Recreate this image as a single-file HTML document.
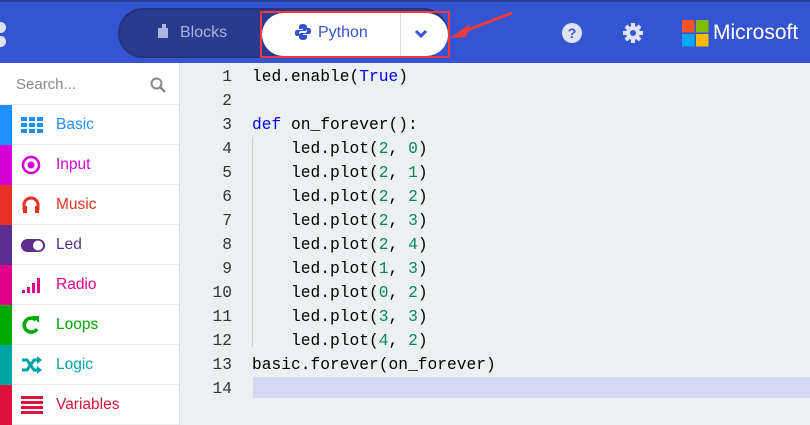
<!DOCTYPE html>
<html><head><meta charset="utf-8"><style>
*{margin:0;padding:0;box-sizing:border-box}
body{width:810px;height:425px;overflow:hidden;background:#ecf0f1;font-family:"Liberation Sans",sans-serif;position:relative}
#hdr{position:absolute;left:0;top:0;width:810px;height:63px;background:#3454d1;border-top:2px solid #2a3f9e}
.pill{position:absolute;left:118px;top:6px;width:330px;height:50px;border-radius:25px;background:#2a3b8f;border:2px solid #24337a}
.blk{position:absolute;left:157px;top:22px;color:#a9b4e0;font-size:16px}
.py{position:absolute;left:262px;top:11px;width:186px;height:43px;background:#fff;border-radius:22px 22px 22px 22px}
.py span{position:absolute;left:56px;top:11px;color:#3454d1;font-size:16px}
.sep{position:absolute;left:138px;top:0;width:1px;height:43px;background:#ddd}
.red{position:absolute;left:260px;top:9px;width:190px;height:47px;border:2px solid #f03a3a}
#side{position:absolute;left:0;top:63px;width:180px;height:362px;background:#fff;border-right:1px solid #ddd}
.srch{height:42px;padding:13px 16px;color:#888;font-size:15px;position:relative;border-bottom:1px solid #eee}
.it{height:40px;position:relative;border-bottom:1px solid #eee;font-size:15.5px}
.it .c{position:absolute;left:0;top:0;width:12px;height:40px}
.it .t{position:absolute;left:56px;top:11px}
.it svg{position:absolute;left:21px;top:10px}
#code{position:absolute;left:180px;top:67px;font-family:"Liberation Mono",monospace;font-size:16.25px;color:#000}
.ln{position:absolute;left:0;width:52px;text-align:right;color:#333}
.cd{position:absolute;left:72px;white-space:pre}
.k{color:#00f}.n{color:#098658}
</style></head><body>
<div id="hdr">
<div style="position:absolute;left:-6px;top:20px;width:12px;height:11px;border-radius:6px;background:#dfe3f5"></div>
<div style="position:absolute;left:-6px;top:34px;width:12px;height:11px;border-radius:6px;background:#dfe3f5"></div>
<div class="pill"></div>
<svg style="position:absolute;left:158px;top:22px" width="14" height="14"><path d="M0 4h4V0h4v4h2v10H0z" fill="#a9b4e0"/></svg>
<div class="blk" style="left:180px">Blocks</div>
<div class="py"><svg style="position:absolute;left:33px;top:11px" width="16" height="16" viewBox="0 0 16 16"><path d="M8 0C4 0 4 2 4 3v2h4v1H2C0 6 0 8 0 9s0 3 2 3h2V9c0-1 1-2 2-2h4c1 0 2-1 2-2V3c0-2-2-3-4-3z" fill="#3454d1"/><path d="M8 16c4 0 4-2 4-3v-2H8v-1h6c2 0 2-2 2-3s0-3-2-3h-2v3c0 1-1 2-2 2H6c-1 0-2 1-2 2v2c0 2 2 3 4 3z" fill="#3454d1"/></svg><span>Python</span><div class="sep"></div>
<svg style="position:absolute;left:152px;top:16px" width="14" height="10"><path d="M2 2l5 5 5-5" stroke="#3454d1" stroke-width="3" fill="none"/></svg></div>
<div class="red"></div>
<svg style="position:absolute;left:448px;top:8px" width="66" height="30"><path d="M64 3L14 22" stroke="#f03a3a" stroke-width="3"/><path d="M2 28L22 14L18 27z" fill="#f03a3a"/></svg>
<svg style="position:absolute;left:561px;top:20px" width="22" height="22"><circle cx="11" cy="11" r="10" fill="#dfe3f5"/><text x="11" y="16" text-anchor="middle" font-size="14" font-weight="bold" fill="#3454d1" font-family="Liberation Sans">?</text></svg>
<svg style="position:absolute;left:622px;top:20px" width="22" height="22" viewBox="0 0 22 22"><g fill="#dfe3f5"><circle cx="11" cy="11" r="7"/><rect x="9" y="1" width="4" height="20"/><rect x="1" y="9" width="20" height="4"/><rect x="9" y="1" width="4" height="20" transform="rotate(45 11 11)"/><rect x="9" y="1" width="4" height="20" transform="rotate(-45 11 11)"/></g><circle cx="11" cy="11" r="3" fill="#3454d1"/></svg>
<svg style="position:absolute;left:682px;top:18px" width="27" height="27"><rect width="12.5" height="12.5" fill="#f35325"/><rect x="14" width="12.5" height="12.5" fill="#81bc06"/><rect y="14" width="12.5" height="12.5" fill="#05a6f0"/><rect x="14" y="14" width="12.5" height="12.5" fill="#ffba08"/></svg>
<div style="position:absolute;left:713px;top:19px;color:#fff;font-size:21px">Microsoft</div>
</div>
<div id="side">
<div class="srch">Search...<svg style="position:absolute;left:150px;top:14px" width="16" height="16"><circle cx="6.5" cy="6.5" r="5" stroke="#888" stroke-width="2" fill="none"/><path d="M10 10l5 5" stroke="#888" stroke-width="2.5"/></svg></div>
<div class="it"><div class="c" style="background:#1e90ff"></div><svg width="22" height="20"><g fill="#1e90ff"><rect x="0" y="2" width="6" height="4"/><rect x="8" y="2" width="6" height="4"/><rect x="16" y="2" width="6" height="4"/><rect x="0" y="8" width="6" height="4"/><rect x="8" y="8" width="6" height="4"/><rect x="16" y="8" width="6" height="4"/><rect x="0" y="14" width="6" height="4"/><rect x="8" y="14" width="6" height="4"/><rect x="16" y="14" width="6" height="4"/></g></svg><div class="t" style="color:#1e90ff">Basic</div></div>
<div class="it"><div class="c" style="background:#d400d4"></div><svg width="22" height="20"><circle cx="10" cy="10" r="8" stroke="#d400d4" stroke-width="2.5" fill="none"/><circle cx="10" cy="10" r="3.5" fill="#d400d4"/></svg><div class="t" style="color:#d400d4">Input</div></div>
<div class="it"><div class="c" style="background:#e63022"></div><svg width="22" height="20"><path d="M3 15V10a7 7 0 0 1 14 0v5" stroke="#e63022" stroke-width="3" fill="none"/><rect x="2" y="11" width="4" height="7" fill="#e63022"/><rect x="14" y="11" width="4" height="7" fill="#e63022"/></svg><div class="t" style="color:#e63022">Music</div></div>
<div class="it"><div class="c" style="background:#5c2d91"></div><svg width="24" height="20"><rect x="0" y="4" width="24" height="13" rx="6.5" fill="#5c2d91"/><circle cx="17" cy="10.5" r="5" fill="#fff"/></svg><div class="t" style="color:#5c2d91">Led</div></div>
<div class="it"><div class="c" style="background:#e3008c"></div><svg width="22" height="20"><g fill="#e3008c"><rect x="1" y="15" width="3" height="3"/><rect x="6" y="12" width="3" height="6"/><rect x="11" y="8" width="3" height="10"/><rect x="16" y="3" width="3" height="15"/></g></svg><div class="t" style="color:#e3008c">Radio</div></div>
<div class="it"><div class="c" style="background:#00aa00"></div><svg width="22" height="20"><path d="M15 5A7 7 0 1 0 16 14" stroke="#00aa00" stroke-width="3.5" fill="none"/><path d="M11 1h7v7z" fill="#00aa00"/></svg><div class="t" style="color:#00aa00">Loops</div></div>
<div class="it"><div class="c" style="background:#00a4a6"></div><svg width="22" height="20"><path d="M1 5h5l7 10h4M1 15h5l7-10h4" stroke="#00a4a6" stroke-width="3" fill="none"/><path d="M16 1l5 4-5 4zM16 11l5 4-5 4z" fill="#00a4a6"/></svg><div class="t" style="color:#00a4a6">Logic</div></div>
<div class="it"><div class="c" style="background:#dc143c"></div><svg width="22" height="20"><g fill="#dc143c"><rect y="1" width="22" height="3"/><rect y="6" width="22" height="3"/><rect y="11" width="22" height="3"/><rect y="16" width="22" height="3"/></g></svg><div class="t" style="color:#dc143c">Variables</div></div>
</div>
<div style="position:absolute;left:252px;top:137px;width:1px;height:210px;background:#ccc"></div>
<div style="position:absolute;left:253px;top:377px;width:557px;height:21px;background:#d5d8f2"></div>
<div id="code">
<div class="ln" style="top:0">1</div><div class="cd" style="top:0">led.enable(<span class="k">True</span>)</div>
<div class="ln" style="top:24px">2</div>
<div class="ln" style="top:48px">3</div><div class="cd" style="top:48px"><span class="k">def</span> on_forever():</div>
<div class="ln" style="top:72px">4</div><div class="cd" style="top:72px">    led.plot(<span class="n">2</span>, <span class="n">0</span>)</div>
<div class="ln" style="top:96px">5</div><div class="cd" style="top:96px">    led.plot(<span class="n">2</span>, <span class="n">1</span>)</div>
<div class="ln" style="top:120px">6</div><div class="cd" style="top:120px">    led.plot(<span class="n">2</span>, <span class="n">2</span>)</div>
<div class="ln" style="top:144px">7</div><div class="cd" style="top:144px">    led.plot(<span class="n">2</span>, <span class="n">3</span>)</div>
<div class="ln" style="top:168px">8</div><div class="cd" style="top:168px">    led.plot(<span class="n">2</span>, <span class="n">4</span>)</div>
<div class="ln" style="top:192px">9</div><div class="cd" style="top:192px">    led.plot(<span class="n">1</span>, <span class="n">3</span>)</div>
<div class="ln" style="top:216px">10</div><div class="cd" style="top:216px">    led.plot(<span class="n">0</span>, <span class="n">2</span>)</div>
<div class="ln" style="top:240px">11</div><div class="cd" style="top:240px">    led.plot(<span class="n">3</span>, <span class="n">3</span>)</div>
<div class="ln" style="top:264px">12</div><div class="cd" style="top:264px">    led.plot(<span class="n">4</span>, <span class="n">2</span>)</div>
<div class="ln" style="top:288px">13</div><div class="cd" style="top:288px">basic.forever(on_forever)</div>
<div class="ln" style="top:312px">14</div>
</div>
</body></html>
